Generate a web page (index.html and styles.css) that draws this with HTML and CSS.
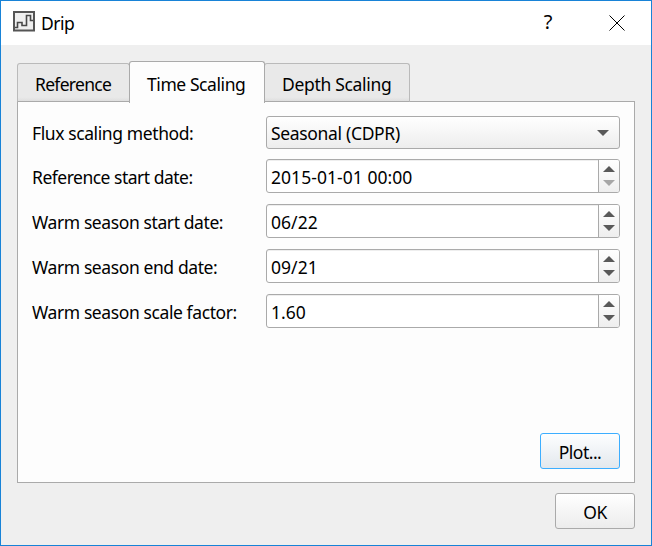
FILE: index.html
```html
<!DOCTYPE html>
<html lang="en">
<head>
<meta charset="utf-8">
<title>Drip</title>
<link rel="stylesheet" href="styles.css">
</head>
<body>
<div class="window">
  <header class="titlebar">
    <svg class="app-icon" width="22" height="21" viewBox="0 0 22 21"><rect x="1" y="1" width="20" height="18.5" fill="#efefef" stroke="#555" stroke-width="2"/><path d="M2 16.5H4.5V11.5H9V14.5H13.5V4.5H17.5V9.5H20" fill="none" stroke="#484848" stroke-width="1.6"/></svg>
    <span class="title">Drip</span>
    <span class="help">?</span>
    <svg class="close" width="16" height="16" viewBox="0 0 16 16"><path d="M.5 .5L15.5 15.5M15.5 .5L.5 15.5" stroke="#000" stroke-width="1"/></svg>
  </header>
  <main class="content">
    <nav class="tabs">
      <div class="tab tab-reference"><span>Reference</span></div>
      <div class="tab tab-active"><span>Time Scaling</span></div>
      <div class="tab tab-depth"><span>Depth Scaling</span></div>
    </nav>
    <section class="panel">
      <div class="row row-combo">
        <label>Flux scaling method:</label>
        <div class="field combo"><span>Seasonal (CDPR)</span><svg class="drop" width="12" height="6"><path d="M0 0H12L6 6Z" fill="#595959"/></svg></div>
      </div>
      <div class="row">
        <label class="label-reference">Reference start date:</label>
        <div class="field"><span>2015-01-01 00:00</span><div class="spin"><svg width="12" height="6"><path d="M0 6H12L6 0Z" fill="#595959"/></svg><svg width="12" height="6"><path d="M0 0H12L6 6Z" fill="#a6a6a6"/></svg></div></div>
      </div>
      <div class="row">
        <label>Warm season start date:</label>
        <div class="field"><span>06/22</span><div class="spin"><svg width="12" height="6"><path d="M0 6H12L6 0Z" fill="#595959"/></svg><svg width="12" height="6"><path d="M0 0H12L6 6Z" fill="#595959"/></svg></div></div>
      </div>
      <div class="row">
        <label>Warm season end date:</label>
        <div class="field"><span>09/21</span><div class="spin"><svg width="12" height="6"><path d="M0 6H12L6 0Z" fill="#595959"/></svg><svg width="12" height="6"><path d="M0 0H12L6 6Z" fill="#595959"/></svg></div></div>
      </div>
      <div class="row">
        <label>Warm season scale factor:</label>
        <div class="field"><span>1.60</span><div class="spin"><svg width="12" height="6"><path d="M0 6H12L6 0Z" fill="#595959"/></svg><svg width="12" height="6"><path d="M0 0H12L6 6Z" fill="#595959"/></svg></div></div>
      </div>
      <button class="button plot"><span>Plot...</span></button>
    </section>
    <button class="button ok"><span>OK</span></button>
  </main>
</div>
</body>
</html>
```
FILE: styles.css
```css
* { box-sizing: border-box; }
body {
  margin: 0;
  font: 17.5px/24px "Noto Sans", "Open Sans", sans-serif;
  letter-spacing: -0.5px;
  color: #000;
  white-space: nowrap;
}
svg { display: block; }
.window {
  width: 652px;
  height: 546px;
  border: 1px solid #1883d7;
  background: #efefef;
}
.titlebar {
  height: 44px;
  display: flex;
  align-items: center;
  padding: 0 26px 0 12px;
  background: #fff;
}
.app-icon { margin-top: -3px; }
.title { margin-left: 6px; margin-top: -1px; }
.help { margin-left: auto; margin-right: 57px; font-size: 20px; margin-top: -2px; }
.close { margin-right: 0; }
.content {
  display: flex;
  flex-direction: column;
  padding: 16px 16px 0;
}
.tabs {
  display: flex;
  align-items: flex-end;
  height: 42px;
  margin-bottom: -2px;
  position: relative;
}
.tab {
  display: flex;
  align-items: center;
  height: 39px;
  margin-bottom: 1px;
  padding: 3px 0 0 17px;
  border: 1px solid #bababa;
  border-bottom-color: #aaa;
  border-radius: 3px 3px 0 0;
  background: linear-gradient(#e9e9e9 90%, #dedede);
}
.tab-reference { width: 113px; letter-spacing: -0.7px; }
.tab-active {
  width: 136px;
  height: 42px;
  margin: 0 -1px;
  padding-top: 3px;
  border-color: #aaa;
  border-bottom: 0;
  background: #fdfdfd;
  letter-spacing: -0.42px;
  z-index: 1;
}
.tab-depth { width: 146px; letter-spacing: -0.32px; }
.panel {
  display: flex;
  flex-direction: column;
  height: 382px;
  padding: 14px 14px 13px;
  border: 1px solid #aaa;
  background: #fdfdfd;
}
.row {
  display: flex;
  height: 34px;
  margin-bottom: 11px;
}
.row-combo { height: 33px; margin-bottom: 10px; }
label {
  width: 234px;
  padding-top: 6px;
  letter-spacing: -0.4px;
}
.label-reference { letter-spacing: -0.5px; }
.row-combo label { padding-top: 5px; }
.field {
  display: flex;
  justify-content: space-between;
  width: 354px;
  border: 1px solid #aaa;
  border-radius: 3px;
  background: #fff;
  box-shadow: inset 0 1px #eee;
  overflow: hidden;
  letter-spacing: 0.05px;
}
.field > span { padding: 5px 0 0 4px; }
.combo {
  background: linear-gradient(#fff, #ededed);
  box-shadow: none;
  letter-spacing: -0.33px;
}
.combo > span { padding-top: 4px; }
.drop { margin: 13px 10px 0 0; }
.spin {
  width: 21px;
  border-left: 1px solid #aaa;
  background: linear-gradient(#fff, #eee);
  display: flex;
  flex-direction: column;
  gap: 8px;
  padding: 6px 4px 0;
}
.button {
  width: 80px;
  height: 36px;
  padding: 2px 0 0;
  align-self: flex-end;
  border: 1px solid #aaa;
  border-radius: 3px;
  background: linear-gradient(#fff, #ececec);
  font: inherit;
  letter-spacing: inherit;
  color: inherit;
}
.plot {
  margin-top: auto;
  border-color: #3daeff;
  background: linear-gradient(#fdfeff, #e3e8ed);
}
.ok { margin-top: 10px; }
```
